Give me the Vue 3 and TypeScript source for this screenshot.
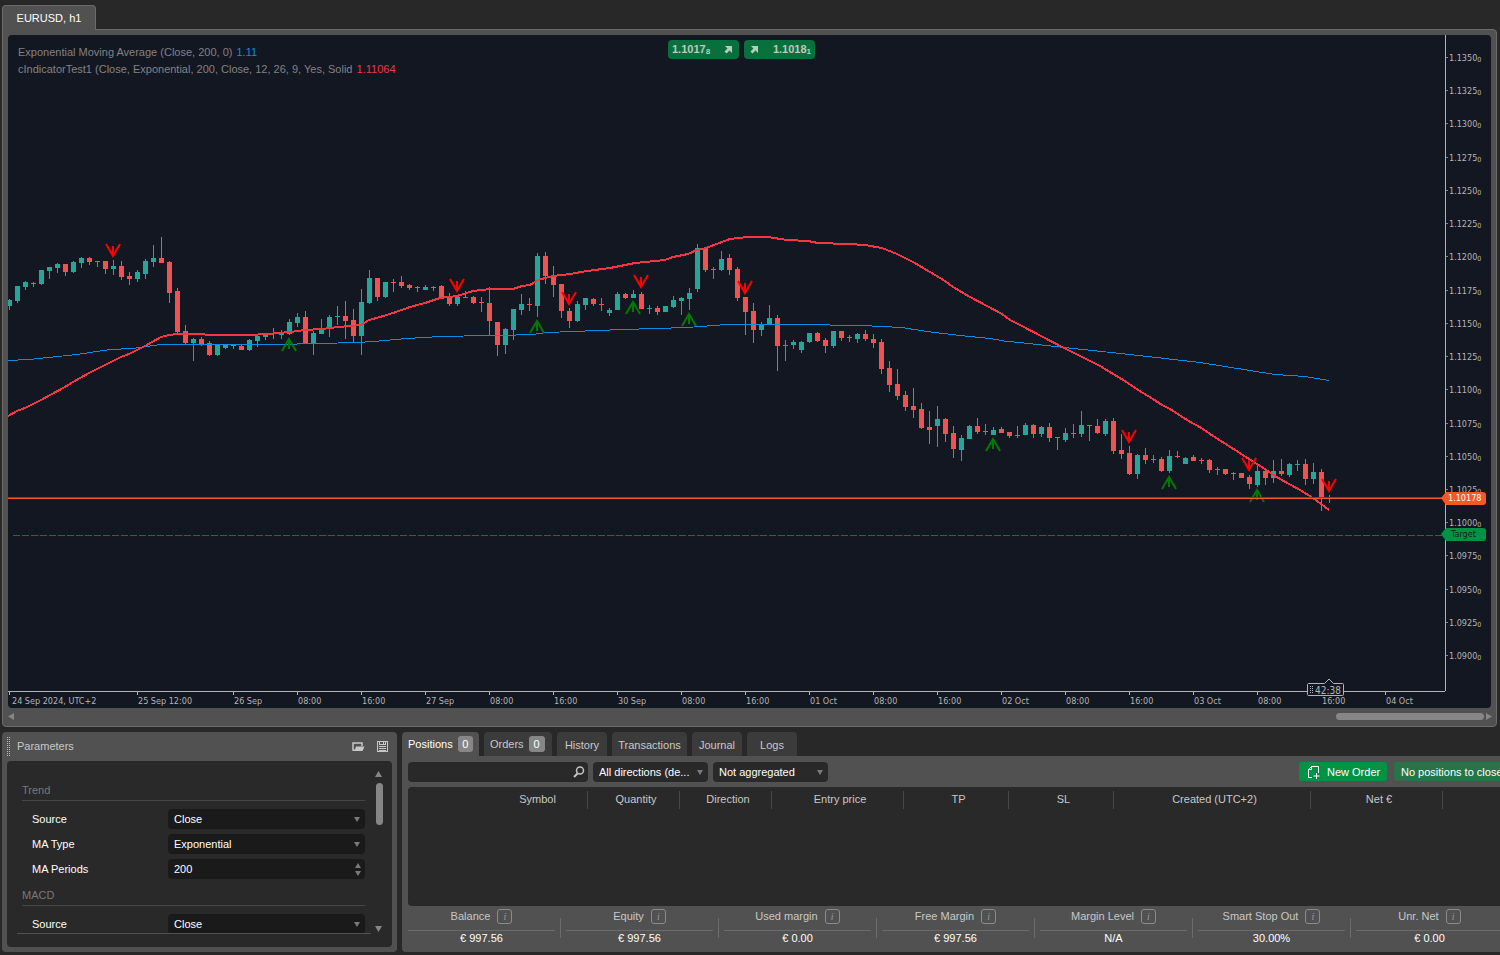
<script setup lang="ts">
import { ref } from 'vue'

type Candle = [high: number, top: number, bottom: number, low: number, up: number]

const STEP = 8
const FIRST_X = 9

const candles: Candle[] = [
  [299,300,306,310,1],[286,286,301,303,1],[281,282,287,290,1],[282,283,284,287,0],[270,270,284,285,1],
  [267,267,271,279,1],[263,264,268,273,1],[264,264,272,276,0],[261,262,272,273,1],[257,258,263,268,1],
  [257,258,262,265,0],[261,261,262,267,0],[261,261,269,274,0],[260,266,269,275,1],[261,266,277,280,0],
  [272,276,279,285,0],[270,272,279,282,1],[259,261,274,279,1],[245,258,262,267,1],[237,258,263,263,0],
  [261,262,293,303,0],[288,291,332,334,0],[325,331,343,344,0],[338,339,343,361,1],[337,339,345,346,0],
  [341,343,355,356,0],[344,344,355,356,1],[344,345,348,349,1],[344,345,346,349,0],[345,346,350,350,0],
  [339,340,350,351,1],[335,336,341,347,1],[333,335,337,340,1],[328,333,334,339,0],[330,334,335,339,1],
  [319,322,334,335,1],[313,317,323,327,1],[311,317,343,344,0],[331,333,343,355,1],[319,330,334,334,1],
  [315,317,329,337,1],[306,316,317,325,1],[301,316,321,339,0],[309,320,336,342,0],[289,302,336,355,1],
  [270,278,303,304,1],[278,278,297,301,0],[282,282,297,298,1],[279,282,283,292,0],[276,282,286,288,0],
  [284,285,288,290,0],[286,287,288,292,0],[285,287,290,290,1],[286,287,288,291,1],[285,286,297,299,0],
  [293,298,304,306,0],[296,297,304,306,1],[291,297,298,298,1],[296,297,303,304,0],[297,302,303,312,0],
  [287,303,321,336,0],[322,322,345,356,0],[328,329,345,354,1],[309,309,330,340,1],[294,304,310,315,1],
  [298,304,305,311,0],[253,256,306,317,1],[252,256,276,284,0],[266,275,285,297,0],[284,284,311,318,0],
  [308,311,321,328,0],[301,304,321,322,1],[298,298,305,310,1],[298,299,304,306,0],[298,304,305,311,0],
  [308,310,313,316,1],[292,294,310,310,1],[293,294,298,299,0],[290,294,298,298,1],[292,294,309,309,0],
  [305,308,309,314,1],[306,308,312,315,0],[306,306,312,312,1],[296,300,307,308,1],[297,298,301,315,1],
  [288,293,299,310,1],[244,248,289,292,1],[248,248,270,272,0],[267,269,270,279,1],[251,259,270,271,1],
  [254,258,270,275,0],[267,269,298,301,0],[297,297,312,335,0],[303,311,330,343,0],[322,325,330,336,1],
  [305,318,324,325,1],[315,318,346,371,0],[340,345,346,361,1],[340,342,345,349,1],[341,342,350,353,1],
  [333,333,342,343,1],[332,333,341,342,0],[338,340,346,353,0],[331,331,346,348,1],[331,331,338,341,0],
  [335,337,338,342,0],[333,334,339,343,1],[330,334,339,341,0],[334,339,343,348,0],[339,342,369,374,0],
  [361,368,385,392,0],[369,384,396,400,0],[391,395,407,411,0],[388,406,410,418,0],[403,409,428,429,0],
  [411,427,430,444,0],[406,419,426,447,1],[418,419,434,442,0],[426,433,449,458,0],[435,438,450,461,1],
  [425,426,439,439,1],[418,426,432,434,0],[424,431,432,435,1],[427,430,435,435,1],[427,429,433,433,0],
  [432,432,436,438,0],[426,435,436,438,1],[423,425,435,435,1],[424,425,434,438,0],[426,427,434,437,1],
  [423,427,438,442,0],[437,437,438,450,0],[428,433,440,442,1],[424,433,434,438,1],[411,425,434,437,1],
  [425,425,426,441,0],[419,426,433,434,0],[419,421,434,436,1],[418,421,451,454,0],[434,450,454,459,0],
  [446,453,474,475,0],[454,455,474,479,1],[448,455,460,464,0],[455,459,460,463,1],[457,459,471,472,0],
  [450,456,471,473,1],[451,456,457,458,0],[457,458,464,464,1],[455,457,461,461,0],[458,460,461,464,0],
  [459,460,470,473,0],[467,469,470,475,1],[469,469,474,475,0],[472,473,474,480,0],[473,473,478,478,0],
  [475,477,484,489,0],[465,471,485,487,1],[469,471,478,485,0],[460,471,478,483,1],[459,471,474,476,0],
  [463,464,475,477,1],[460,464,465,471,1],[459,464,479,485,0],[463,472,479,484,1],[469,472,498,511,0],
  [495,498,499,503,1],
]

const fastLine =
  '8,416 17,411 25,408 41,400 50,395 65,387 73,382 89,373 105,365 121,357 129,354 145,346 161,337 169,335 178,334 200,334 210,335 250,335 267,334 290,332 305,330 322,329 338,327 361,325 369,320 380,317 393,313 410,307 425,303 440,298 457,296 473,291 490,289 513,289 522,286 530,285 538,280 553,276 570,274 587,271 610,268 620,266 635,263 665,260 673,257 688,254 697,250 706,248 722,242 730,239 747,237 768,237 787,240 808,241 818,243 848,244 865,245 882,248 897,254 913,262 930,272 945,281 953,287 970,297 987,306 1002,314 1010,320 1020,325 1064,348 1100,366 1128,383 1138,390 1153,399 1162,405 1170,409 1187,420 1203,429 1210,434 1235,450 1257,464 1280,479 1300,490 1313,498 1329,510'
const slowLine =
  '8,360 29,359 77,354 110,349 133,348 160,344 277,344 358,342 373,341 407,338 440,336 488,335 500,335 533,334 547,332 598,330 623,329 687,327 727,324 797,324 862,325 902,327 927,331 960,335 990,338 1007,341 1020,342 1064,347 1130,354 1200,362 1250,370 1275,374 1305,376 1329,380'

const sellMarks = [[113,257],[457,292],[569,305],[641,288],[745,294],[1129,443],[1249,471],[1329,492]]
const buyMarks = [[289,338],[537,320],[633,301],[689,313],[993,438],[1169,476],[1257,489]]

const prices = Array.from({ length: 19 }, (_, i) => ({
  text: (1.135 - i * 0.0025).toFixed(4),
  y: Math.round(22 + i * 33.23),
}))

const days = ['26 Sep', '27 Sep', '30 Sep', '01 Oct', '02 Oct', '03 Oct']
const times = [
  { tick: 1, text: '24 Sep 2024, UTC+2', at: 4 },
  { tick: 129, text: '25 Sep 12:00', at: 130 },
  ...[...days.flatMap((d) => [d, '08:00', '16:00']), '04 Oct'].map((text, i) => ({
    tick: 225 + i * 64,
    text,
    at: 226 + i * 64,
  })),
]

const tabs = [
  { name: 'Positions', count: 0 },
  { name: 'Orders', count: 0 },
  { name: 'History' },
  { name: 'Transactions' },
  { name: 'Journal' },
  { name: 'Logs' },
]
const activeTab = ref('Positions')

const columns = ['', 'Symbol', 'Quantity', 'Direction', 'Entry price', 'TP', 'SL', 'Created (UTC+2)', 'Net €', '']

const stats = [
  ['Balance', '€ 997.56'],
  ['Equity', '€ 997.56'],
  ['Used margin', '€ 0.00'],
  ['Free Margin', '€ 997.56'],
  ['Margin Level', 'N/A'],
  ['Smart Stop Out', '30.00%'],
  ['Unr. Net', '€ 0.00'],
]

const trendSource = ref('Close')
const maType = ref('Exponential')
const periods = ref(200)
const macdSource = ref('Close')
const query = ref('')
const direction = ref('All directions (de...')
const grouping = ref('Not aggregated')
</script>

<template>
  <div class="app">
    <nav class="chart-tabs"><button class="chart-tab">EURUSD, h1</button></nav>

    <section class="frame">
      <div class="chart">
        <svg class="plot" shape-rendering="crispEdges">
          <g transform="translate(-8 -35)">
            <g v-for="(c, i) in candles" :key="i" :class="c[4] ? 'up' : 'down'">
              <rect :x="FIRST_X + i * STEP" :y="c[0]" width="1" :height="c[3] - c[0]" />
              <rect :x="FIRST_X + i * STEP - 2" :y="c[1]" width="5" :height="c[2] - c[1]" />
            </g>
            <polyline class="slow" transform="translate(0 0.5)" :points="slowLine" />
            <polyline class="fast" :points="fastLine" />
            <g class="sell" shape-rendering="auto">
              <path v-for="m in sellMarks" :key="m[0]" :transform="`translate(${m[0]} ${m[1]})`" d="M-7 -13L0 -1L7 -13M0 -11V-1" />
            </g>
            <g class="buy" shape-rendering="auto">
              <path v-for="m in buyMarks" :key="m[0]" :transform="`translate(${m[0]} ${m[1]})`" d="M-7 13L0 1L7 13M0 11V1" />
            </g>
          </g>
          <rect class="ask" y="462" width="100%" height="1" />
          <rect class="bid" y="463" width="100%" height="1" />
          <line class="target" x1="5" x2="100%" y1="500" y2="500" />
        </svg>

        <svg class="prices">
          <rect class="axis" width="1" height="100%" />
          <g v-for="p in prices" :key="p.text">
            <rect class="tick" x="1" :y="p.y" width="2" height="1" />
            <text x="4" :y="p.y + 4">{{ p.text }}<tspan class="sub" dy="1">0</tspan></text>
          </g>
          <path class="tag-target" d="M-4 499L1 493H38Q41 493 41 496V503Q41 506 38 506H1Z" />
          <text class="on-target" x="6" y="502">Target</text>
          <path class="tag-bid" d="M-4 463L1 457H38Q41 457 41 460V467Q41 470 38 470H1Z" />
          <text class="on-bid" x="3" y="466">1.10178</text>
        </svg>

        <svg class="times">
          <rect class="axis" width="100%" height="1" />
          <g v-for="t in times" :key="t.tick">
            <rect class="axis" :x="t.tick" y="1" width="1" height="3" />
            <text :x="t.at" y="13">{{ t.text }}</text>
          </g>
          <path class="timer" d="M1300.5 -7.500H1316.500L1321 -12L1325.500 -7.500H1334.500Q1335.500 -7.500 1335.500 -6.500V3.500Q1335.500 4.500 1334.500 4.500H1300.500Q1299.500 4.500 1299.500 3.500V-6.500Q1299.500 -7.500 1300.500 -7.500Z" />
          <path class="dots" d="M1302.500 -5V3M1304.500 -5V3" />
          <text class="clock" x="1307" y="3">42:38</text>
        </svg>

        <div class="legend">
          <p>Exponential Moving Average (Close, 200, 0) <b class="blue">1.11</b></p>
          <p>cIndicatorTest1 (Close, Exponential, 200, Close, 12, 26, 9, Yes, Solid <b class="red">1.11064</b></p>
        </div>

        <div class="quotes">
          <button class="quote">
            <span>1.1017<small>8</small></span>
            <svg width="8" height="8"><path d="M1 0H8V7L5.500 4.500L2.500 7.500L0.500 5.500L3.500 2.500Z" /></svg>
          </button>
          <button class="quote">
            <svg width="8" height="8"><path d="M1 0H8V7L5.500 4.500L2.500 7.500L0.500 5.500L3.500 2.500Z" /></svg>
            <span>1.1018<small>1</small></span>
          </button>
        </div>
      </div>

      <div class="hscroll">
        <svg width="6" height="8"><path d="M6 1V8L0 4.500Z" /></svg>
        <span class="hthumb"></span>
        <svg width="6" height="8"><path d="M0 1V8L6 4.500Z" /></svg>
      </div>
    </section>

    <div class="bottom">
      <section class="params">
        <header>
          <svg class="grip" width="4" height="20"><path d="M0.500 0V20M2.500 0V20" /></svg>
          <h2>Parameters</h2>
          <button class="icon" aria-label="Open">
            <svg width="13" height="9"><path d="M1 8V1H10V4" fill="none" stroke="#c8c8c8" stroke-width="1.500" /><path d="M4 4.500H12.500L10.500 9H0.500V7.500H3Z" fill="#c8c8c8" /></svg>
          </button>
          <button class="icon" aria-label="Save">
            <svg width="11" height="11" fill="none" stroke="#c8c8c8" shape-rendering="crispEdges"><path d="M0.500 0.500H10.500V10.500H0.500Z" /><path d="M2.500 0V3.500H8.500V0M6.500 1V3M2 5.500H9M2 7.500H9M2 9.500H9" /></svg>
          </button>
        </header>
        <div class="params-body">
          <form class="fields" @submit.prevent>
            <h3>Trend</h3>
            <div class="row">
              <label for="src">Source</label>
              <span class="box"><select id="src" v-model="trendSource"><option>Close</option></select><i class="caret"></i></span>
            </div>
            <div class="row">
              <label for="type">MA Type</label>
              <span class="box"><select id="type" v-model="maType"><option>Exponential</option></select><i class="caret"></i></span>
            </div>
            <div class="row">
              <label for="per">MA Periods</label>
              <span class="box">
                <input id="per" v-model.number="periods" type="number" />
                <span class="spin">
                  <button type="button" aria-label="Increase" @click="periods++"><i class="caret flip"></i></button>
                  <button type="button" aria-label="Decrease" @click="periods--"><i class="caret"></i></button>
                </span>
              </span>
            </div>
            <h3>MACD</h3>
            <div class="row">
              <label for="src2">Source</label>
              <span class="box"><select id="src2" v-model="macdSource"><option>Close</option></select><i class="caret"></i></span>
            </div>
          </form>
          <div class="vscroll">
            <svg width="8" height="6"><path d="M0 6H7L3.500 0Z" /></svg>
            <span class="vthumb"></span>
            <svg width="8" height="6"><path d="M0 0H7L3.500 6Z" /></svg>
          </div>
        </div>
      </section>

      <section class="trade">
        <div class="tabs" role="tablist">
          <button
            v-for="t in tabs"
            :key="t.name"
            role="tab"
            :aria-selected="t.name === activeTab"
            :class="['tab', t.name.toLowerCase(), { active: t.name === activeTab, counted: t.count !== undefined }]"
            @click="activeTab = t.name"
          >
            {{ t.name }}<span v-if="t.count !== undefined" class="count">{{ t.count }}</span>
          </button>
        </div>

        <div class="panel">
          <div class="tools">
            <label class="search">
              <input v-model="query" type="text" aria-label="Search positions" />
              <svg width="12" height="12" fill="none" stroke="#c4c4c4"><circle cx="7" cy="4.500" r="3.500" stroke-width="1.500" /><path d="M4.500 7.500L1 11" stroke-width="2" /></svg>
            </label>
            <span class="box pick"><select v-model="direction" aria-label="Direction"><option>All directions (de...</option></select><i class="caret"></i></span>
            <span class="box pick"><select v-model="grouping" aria-label="Grouping"><option>Not aggregated</option></select><i class="caret"></i></span>
            <button class="new">
              <svg width="13" height="14" fill="none" stroke="#fff"><path d="M5 12.500H1.500V4.500L4.500 1.500H11.500V8M1.500 4.500H4.500V1.500M9.500 8V14M6.500 11H12.500" /></svg>
              New Order
            </button>
            <button class="close">No positions to close</button>
          </div>

          <div class="grid">
            <table>
              <colgroup><col v-for="(c, i) in columns" :key="i" :class="`c${i}`" /></colgroup>
              <thead>
                <tr><th v-for="(c, i) in columns" :key="i"><span>{{ c }}</span></th></tr>
              </thead>
            </table>
          </div>

          <dl class="stats">
            <div v-for="s in stats" :key="s[0]">
              <dt>{{ s[0] }}<span class="info">i</span></dt>
              <dd>{{ s[1] }}</dd>
            </div>
          </dl>
        </div>
      </section>
    </div>
  </div>
</template>

<style>
body { background: #282828; }
</style>

<style scoped>
* { box-sizing: border-box; margin: 0; }
.app {
  display: flex; flex-direction: column; height: 100vh; padding: 5px 0 3px 2px; overflow: hidden;
  background: #282828; color: #c8c8c8; font: 11px/14px "Liberation Sans", Arial, sans-serif;
}
button, input, select { font: inherit; color: inherit; border: 0; padding: 0; background: none; outline: 0; }
select { appearance: none; width: 100%; height: 100%; }
svg { display: block; flex: none; }

.chart-tabs { display: flex; position: relative; z-index: 1; height: 25px; flex: none; }
.chart-tab {
  width: 94px; background: #515151; color: #fff; border: 1px solid #6b6b6b; border-bottom: 0; border-radius: 4px 4px 0 0;
}
.frame {
  display: flex; flex-direction: column; flex: 1; min-height: 0; margin: -1px 3px 5px 0;
  padding: 5px; padding-bottom: 0; background: #515151; border: 1px solid #6b6b6b; border-radius: 0 4px 4px 4px;
}
.chart {
  position: relative; display: grid; grid-template: minmax(0, 1fr) 17px / minmax(0, 1fr) 46px; flex: 1; min-height: 0;
  background: #131722; border-radius: 4px; overflow: hidden;
}
.plot, .prices, .times { width: 100%; height: 100%; }
.prices, .times { overflow: visible; font: 9px "DejaVu Sans Condensed", "DejaVu Sans", sans-serif; fill: #b4b4b4; }
.up { fill: #26a69a; }
.down { fill: #ef5350; }
.slow, .fast { fill: none; stroke: #0f8ce0; stroke-width: 1; }
.fast { stroke: #f23645; stroke-width: 2; }
.sell, .buy { fill: none; stroke: #f00; stroke-width: 2; }
.buy { stroke: #007a00; }
.ask { fill: #14703c; }
.bid { fill: #f15a24; }
.target { stroke: #0c7440; stroke-dasharray: 7 2; }
.axis { fill: #b4b4b4; }
.tick { fill: #808080; }
.sub { font-size: 7px; }
.tag-target { fill: #009245; }
.tag-bid { fill: #f15a24; }
.on-target { fill: #0c2318; }
.on-bid { fill: #fff; }
.timer { fill: #131722; stroke: #b4b4b4; }
.dots { stroke: #b4b4b4; stroke-dasharray: 1 1; }
.clock { font-size: 10px; }

.legend { position: absolute; left: 10px; top: 9px; color: #828282; line-height: 17px; }
.legend b { font-weight: 400; margin-left: 1px; }
.blue { color: #0f8ce0; }
.red { color: #f23645; }
.quotes { position: absolute; top: 5px; left: 0; right: 16px; display: flex; justify-content: center; gap: 5px; pointer-events: none; }
.quote {
  display: flex; align-items: center; justify-content: space-between; width: 71px; height: 19px; padding: 1px 4px 0;
  border-radius: 4px; background: #08703c; color: #bccabc; font-weight: 700; pointer-events: auto;
}
.quote:first-child { padding-right: 7px; }
.quote:last-child { padding-left: 6px; }
.quote small { font-size: 8px; vertical-align: -1px; }
.quote svg, .hscroll svg, .vscroll svg { fill: currentColor; }
.hscroll { display: flex; align-items: center; gap: 2px; height: 18px; flex: none; margin-right: -1px; padding-bottom: 2px; color: #868686; }
.hthumb { width: 148px; height: 7px; margin-left: auto; border-radius: 4px; background: #868686; }

.bottom { display: flex; gap: 5px; height: 220px; flex: none; }
.params { display: flex; flex-direction: column; width: 395px; flex: none; padding: 0 5px 5px; border-radius: 4px; background: #515151; }
.params header { display: flex; align-items: center; height: 29px; flex: none; padding-right: 4px; }
.grip path { stroke: #b4b4b4; stroke-dasharray: 1 1; }
.params h2 { flex: 1; margin-left: 6px; padding-bottom: 2px; font-size: 11px; font-weight: 400; }
.icon { margin-left: 12px; }
.params-body { display: flex; flex: 1; min-height: 0; padding: 9px 9px 13px 10px; border-radius: 4px; background: #292929; }
.fields { flex: 1; min-width: 0; padding: 0 6px 0 5px; border-bottom: 1px solid #515151; overflow: hidden; }
.fields h3 { height: 31px; margin-bottom: 8px; padding-top: 13px; border-bottom: 1px solid #454545; color: #787878; font-size: 11px; font-weight: 400; }
.row + h3 { height: 27px; padding-top: 9px; }
.row { display: flex; align-items: center; height: 20px; margin-bottom: 5px; padding-left: 10px; color: #fff; }
.row:has(input) { margin-bottom: 0; }
.row label { width: 136px; }
.box { position: relative; display: flex; align-items: center; flex: 1; height: 20px; padding: 0 5px 0 6px; border-radius: 4px; background: #1a1a1a; color: #fff; }
.box input { flex: 1; min-width: 0; appearance: textfield; }
.box input::-webkit-inner-spin-button { display: none; }
.caret { flex: none; border: 3px solid transparent; border-top: 5px solid #7a7a7a; border-bottom: 0; }
.flip { transform: rotate(180deg); }
.spin { display: flex; flex-direction: column; gap: 3px; margin-right: -1px; }
.spin button { display: flex; }
.vscroll { display: flex; flex-direction: column; align-items: center; width: 8px; margin-left: 4px; padding-top: 1px; gap: 6px; color: #868686; }
.vthumb { width: 7px; height: 42px; margin-bottom: auto; border-radius: 4px; background: #868686; }
.vscroll svg:last-child { margin-bottom: 2px; }

.trade { display: flex; flex-direction: column; flex: 1; min-width: 0; margin-right: -9px; }
.tabs { display: flex; gap: 5px; height: 24px; flex: none; }
.tab { width: 50px; border-radius: 4px 4px 0 0; background: #3b3b3b; padding-top: 2px; }
.counted { display: flex; align-items: center; gap: 5px; padding: 0 6px; }
.positions { width: 77px; }
.orders { width: 68px; }
.transactions { width: 75px; }
.tab.active { background: #515151; color: #fff; }
.count { width: 16px; height: 16px; border-radius: 3px; background: #868686; color: #fff; line-height: 17px; }
.panel { display: flex; flex-direction: column; flex: 1; min-height: 0; padding: 6px 6px 0; border-radius: 0 0 4px 4px; background: #515151; }
.tools { display: flex; gap: 5px; height: 20px; margin-bottom: 5px; }
.search { display: flex; align-items: center; width: 180px; padding: 0 3px 0 6px; border-radius: 4px; background: #292929; }
.search input { flex: 1; min-width: 0; }
.pick { flex: none; width: 115px; background: #292929; }
.new, .close { height: 19px; border-radius: 3px; background: #009245; color: #fff; white-space: nowrap; }
.new { display: flex; align-items: center; gap: 7px; width: 88px; margin-left: auto; padding-left: 8px; }
.close { width: 109px; margin-left: 2px; padding-left: 7px; background: #297348; text-align: left; }
.grid { flex: 1; min-height: 0; border-radius: 4px; background: #292929; }
table { width: 100%; table-layout: fixed; border-collapse: collapse; }
.c0 { width: 75px; }
.c1 { width: 105px; }
.c2, .c3 { width: 92px; }
.c4, .c8 { width: 132px; }
.c5, .c6 { width: 105px; }
.c7 { width: 197px; }
th { height: 25px; padding: 0; font-weight: 400; }
th span { display: block; height: 18px; padding-left: 5px; border-right: 1px solid #484848; line-height: 17px; }
th:first-child span, th:last-child span { border: 0; }
.stats { display: grid; grid-template-columns: repeat(7, minmax(0, 1fr)); gap: 11px; height: 46px; flex: none; text-align: center; }
.stats > div { position: relative; }
.stats > div + div::before { content: ""; position: absolute; left: -6px; top: 12px; width: 1px; height: 20px; background: #6b6b6b; }
.stats dt { display: flex; align-items: center; justify-content: center; gap: 7px; height: 25px; padding-bottom: 4px; border-bottom: 1px solid #6b6b6b; }
.info { width: 15px; height: 15px; border: 1px solid #8c8c8c; border-radius: 3px; color: #999; font: italic 10px/13px "Liberation Serif", serif; }
.stats dd { color: #fff; line-height: 15px; }
</style>
